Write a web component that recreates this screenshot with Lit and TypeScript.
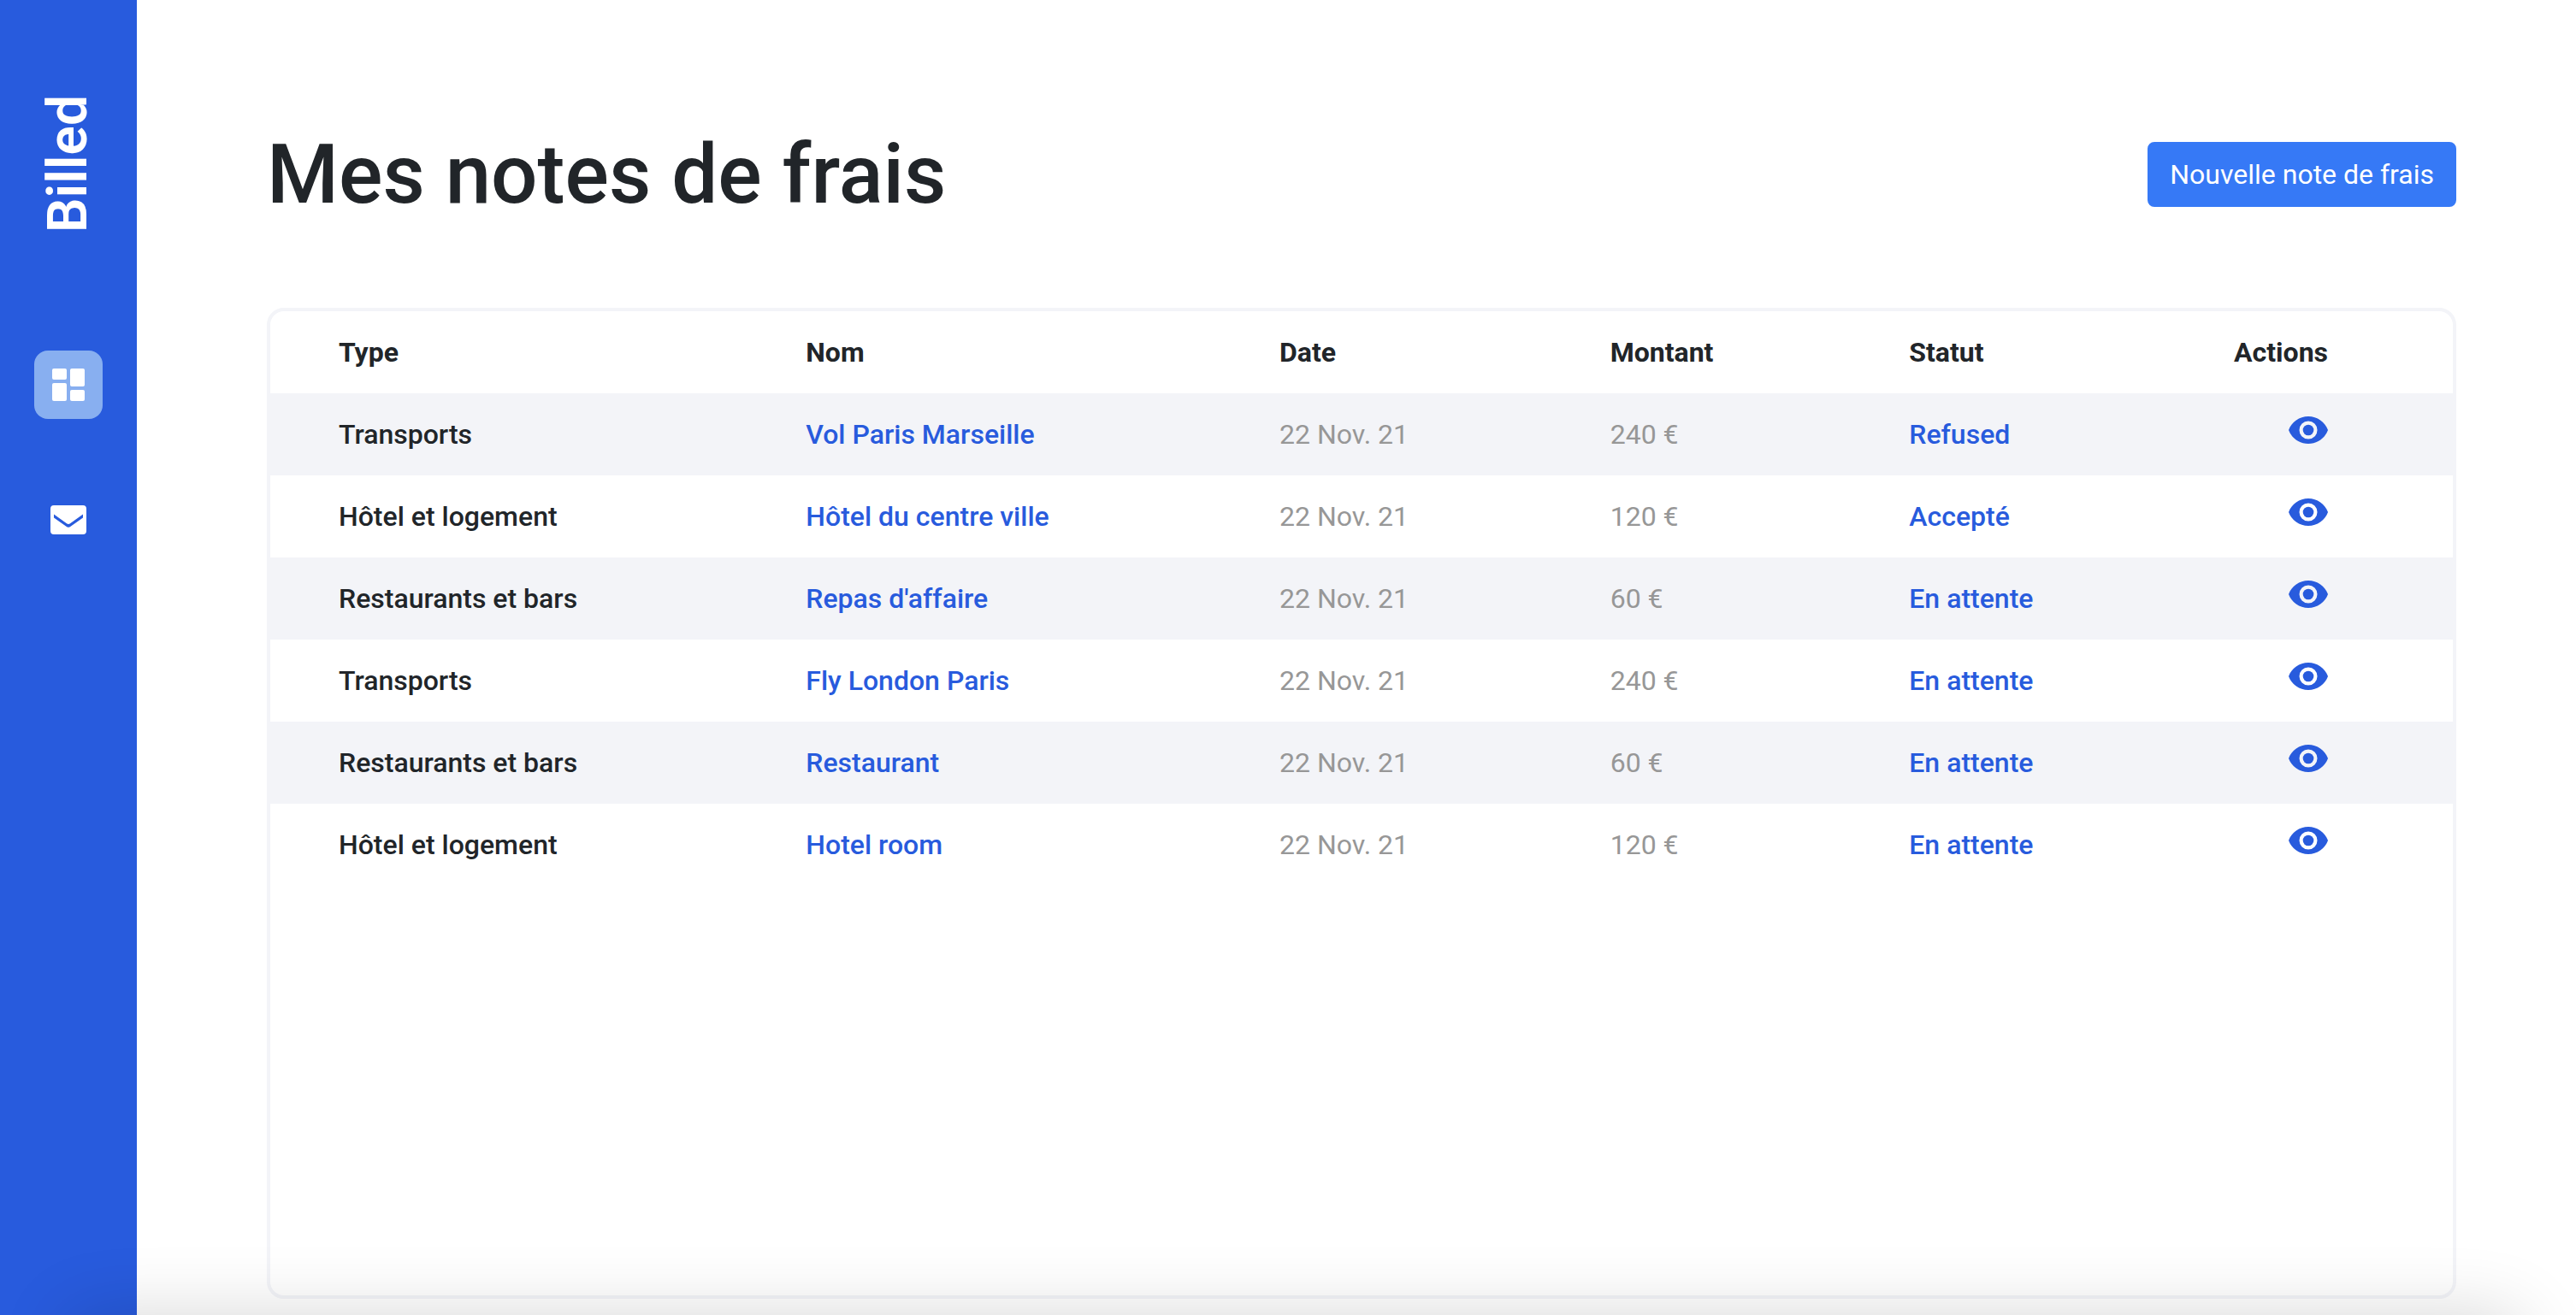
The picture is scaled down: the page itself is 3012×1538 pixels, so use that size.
import { LitElement, html, css } from "lit";
import { customElement } from "lit/decorators.js";

interface Bill {
  type: string;
  name: string;
  date: string;
  amount: string;
  status: string;
}

const bills: Bill[] = [
  { type: "Transports", name: "Vol Paris Marseille", date: "22 Nov. 21", amount: "240 €", status: "Refused" },
  { type: "Hôtel et logement", name: "Hôtel du centre ville", date: "22 Nov. 21", amount: "120 €", status: "Accepté" },
  { type: "Restaurants et bars", name: "Repas d'affaire", date: "22 Nov. 21", amount: "60 €", status: "En attente" },
  { type: "Transports", name: "Fly London Paris", date: "22 Nov. 21", amount: "240 €", status: "En attente" },
  { type: "Restaurants et bars", name: "Restaurant", date: "22 Nov. 21", amount: "60 €", status: "En attente" },
  { type: "Hôtel et logement", name: "Hotel room", date: "22 Nov. 21", amount: "120 €", status: "En attente" },
];

@customElement("billed-sidebar")
export class BilledSidebar extends LitElement {
  static styles = css`
    :host {
      display: flex;
      flex-direction: column;
      align-items: center;
      padding-top: 112px;
      background: #285bdd;
      color: #fff;
    }
    .brand {
      height: 160px;
      margin-bottom: 138px;
      font-size: 64px;
      font-weight: 600;
      line-height: 80px;
      writing-mode: vertical-rl;
      rotate: 180deg;
    }
    .nav {
      display: flex;
      flex-direction: column;
      gap: 78px;
    }
    .link {
      display: flex;
      align-items: center;
      justify-content: center;
      width: 80px;
      height: 80px;
      border-radius: 16px;
      color: inherit;
    }
    .active {
      background: #88aff0;
    }
    .icon {
      fill: currentColor;
    }
  `;

  render() {
    return html`
      <div class="brand">Billed</div>
      <nav class="nav">
        <a class="link active" href="#bills" aria-label="Notes de frais">
          <svg class="icon" width="38" height="38" viewBox="0 0 38 38">
            <rect x="0" y="0" width="17" height="13" rx="2" />
            <rect x="0" y="17" width="17" height="21" rx="2" />
            <rect x="21" y="0" width="17" height="21" rx="2" />
            <rect x="21" y="25" width="17" height="13" rx="2" />
          </svg>
        </a>
        <a class="link" href="#new" aria-label="Messages">
          <svg class="icon" width="42" height="34" viewBox="0 0 42 34">
            <path fill-rule="evenodd" d="M4 0H38Q42 0 42 4V30Q42 34 38 34H4Q0 34 0 30V4Q0 0 4 0ZM4 10.500V14.500L18.500 24.700Q21 26.600 23.500 24.700L38 14.500V10.500L23 21.200Q21 22.600 19 21.200Z" />
          </svg>
        </a>
      </nav>
    `;
  }
}

@customElement("bills-table")
export class BillsTable extends LitElement {
  static styles = css`
    :host {
      display: block;
      border: 4px solid #f3f4f8;
      border-radius: 20px;
      overflow: hidden;
    }
    .table {
      width: 100%;
      table-layout: fixed;
      border-collapse: collapse;
      font-size: 32px;
      line-height: 48px;
      text-align: left;
    }
    .col-type {
      width: 23.6%;
    }
    .col-name {
      width: 21.7%;
    }
    .col-date {
      width: 15.15%;
    }
    .col-amount {
      width: 13.7%;
    }
    .col-status {
      width: 14%;
    }
    .cell {
      padding: 24px;
      font-weight: 500;
      vertical-align: top;
    }
    .cell:first-child {
      padding-left: 80px;
    }
    .cell:last-child {
      padding-right: 146px;
      text-align: right;
    }
    .head {
      font-weight: 700;
    }
    .row:nth-child(odd) {
      background: #f3f4f8;
    }
    .accent {
      color: #285bdd;
    }
    .muted {
      color: #979797;
      font-weight: 400;
    }
    .view {
      display: inline-flex;
      padding: 0;
      border: 0;
      background: none;
      color: #285bdd;
      vertical-align: top;
      cursor: pointer;
    }
    .eye {
      fill: currentColor;
    }
  `;

  private renderRow(bill: Bill) {
    return html`
      <tr class="row">
        <td class="cell">${bill.type}</td>
        <td class="cell accent">${bill.name}</td>
        <td class="cell muted">${bill.date}</td>
        <td class="cell muted">${bill.amount}</td>
        <td class="cell accent">${bill.status}</td>
        <td class="cell">
          <button class="view" aria-label="Voir ${bill.name}">
            <svg class="eye" width="46" height="38" viewBox="0 0 46 38">
              <path fill-rule="evenodd" d="M23 3C12.500 3 3.600 9.500 0 19C3.600 28.500 12.500 35 23 35S42.400 28.500 46 19C42.400 9.500 33.500 3 23 3ZM23 8.500A10.500 10.500 0 1 1 23 29.500A10.500 10.500 0 1 1 23 8.500Z" />
              <circle cx="23" cy="19" r="6.300" />
            </svg>
          </button>
        </td>
      </tr>
    `;
  }

  render() {
    return html`
      <table class="table">
        <colgroup>
          <col class="col-type" />
          <col class="col-name" />
          <col class="col-date" />
          <col class="col-amount" />
          <col class="col-status" />
          <col />
        </colgroup>
        <thead>
          <tr>
            ${["Type", "Nom", "Date", "Montant", "Statut", "Actions"].map(
              (label) => html`<th class="cell head" scope="col">${label}</th>`
            )}
          </tr>
        </thead>
        <tbody>
          ${bills.map((bill) => this.renderRow(bill))}
        </tbody>
      </table>
    `;
  }
}

@customElement("app-root")
export class AppRoot extends LitElement {
  static styles = css`
    :host {
      display: grid;
      grid-template-columns: 160px 1fr;
      position: relative;
      min-height: 100vh;
      overflow: hidden;
      background: #fff;
      color: #212529;
      font-family: Roboto, "Liberation Sans", sans-serif;
    }
    .content {
      display: flex;
      flex-direction: column;
      padding: 144px 140px 19px 152px;
    }
    .header {
      display: flex;
      align-items: center;
      justify-content: space-between;
      margin-bottom: 96px;
    }
    .title {
      margin: 0;
      font-size: 96px;
      font-weight: 500;
      line-height: 120px;
    }
    .new-bill {
      padding: 12px 24px;
      border: 2px solid #3679f6;
      border-radius: 8px;
      background: #3679f6;
      color: #fff;
      font: inherit;
      font-size: 32px;
      line-height: 48px;
      cursor: pointer;
    }
    .bills {
      flex: 1;
    }
    .shade {
      position: absolute;
      top: 100%;
      left: 80px;
      right: 64px;
      height: 200px;
      border-radius: 20px;
      box-shadow: 0 0 84px rgba(0, 0, 0, 0.16);
      pointer-events: none;
    }
  `;

  render() {
    return html`
      <billed-sidebar></billed-sidebar>
      <main class="content">
        <header class="header">
          <h1 class="title">Mes notes de frais</h1>
          <button class="new-bill">Nouvelle note de frais</button>
        </header>
        <bills-table class="bills"></bills-table>
      </main>
      <div class="shade"></div>
    `;
  }
}
